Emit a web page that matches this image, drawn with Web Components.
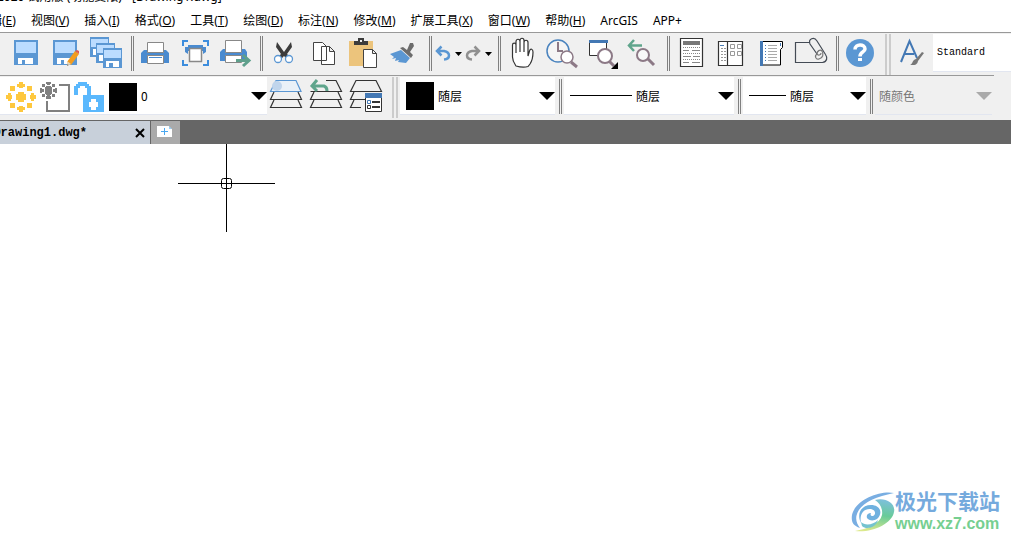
<!DOCTYPE html>
<html lang="zh-CN">
<head>
<meta charset="utf-8">
<title>[Drawing1.dwg]</title>
<style>
  html, body { margin: 0; height: 100%; background: #fff; }
  body { font-family: "Noto Sans", "Noto Sans CJK SC", sans-serif; font-size: 12px; color: #000; }
</style>
</head>
<body>
<cad-app></cad-app>

<script>
const ICONS = {
  save: `<path fill="#5b97d3" d="M8 7h24v25H8z"/><path fill="#bbdcff" d="M10 9h20v11H10z"/><path fill="#fff" d="M12 25h15v6H12z"/><path fill="#5b97d3" d="M16 27h3v5h-3z"/>`,
  saveas: `<path fill="#5b97d3" d="M7 7h24v25H7z"/><path fill="#bbdcff" d="M9 9h20v11H9z"/><path fill="#fff" d="M11 25h14v6H11z"/><path fill="#5b97d3" d="M15 27h3v5h-3z"/><path fill="#f39c1f" d="M29 18l4 3-8 11-4-3z"/><path fill="#e05a50" d="M29 18l2-1 2 1v3z"/><path fill="#e8d5b5" d="M21 28l4 3-4 2z"/><path fill="#888" d="M21 31l2 1-2 1z"/>`,
  saveall: `<path fill="#5b97d3" d="M4 4h19v20H4z"/><path fill="#bbdcff" d="M5 6h17v8H5z"/><path fill="#fff" d="M7 16h12v6H7z"/><path fill="#5b97d3" d="M10 10h19v20H10z"/><path fill="#bbdcff" d="M11 12h17v8H11z"/><path fill="#fff" d="M13 22h12v6H13z"/><path fill="#5b97d3" d="M17 15h19v20H17z"/><path fill="#bbdcff" d="M18 17h17v8H18z"/><path fill="#fff" d="M20 28h13v6H20z"/><path fill="#5b97d3" d="M23 30h4v4h-4z"/>`,
  print: `<path fill="#4a8bd0" d="M9 17h22l3 3v10H6V20z"/><path fill="#fff" stroke="#888" d="M12.500 9.500h16v10h-16zM12.500 22.500h16v8h-16z"/><path stroke="#4a8bd0" d="M14 24.500h13"/>`,
  extents: `<path fill="none" stroke="#3d8ddd" stroke-width="2" d="M8 13V8h5M28 8h5v5M8 27v5h5M28 32h5v-5"/><path fill="#4a8bd0" d="M13 12h15v2h3v5l-3 2v-3H13v3l-3-2v-5h3z"/><path fill="#fff" stroke="#888" stroke-width="1.500" d="M14.500 15.500h12v13h-12z"/>`,
  export: `<path fill="#4a8bd0" d="M8 16h22l2 3v9H5V19z"/><path fill="#fff" stroke="#888" d="M10.500 7.500h16v12h-16zM10.500 22.500h16v7h-16z"/><path fill="none" stroke="#5fa08c" stroke-width="3" d="M21 27.500h12M28 22l6 5.500-6 5.500"/>`,
  cut: `<path fill="#3c3c3c" d="M13 9l7 10 7-10 1 5-5 7 3 3-3 2-3-3-3 3-3-2 3-3-5-7z"/><circle cx="14" cy="26" r="3.500" fill="#fff" stroke="#5b97d3" stroke-width="1.300"/><circle cx="25" cy="26" r="3.500" fill="#fff" stroke="#5b97d3" stroke-width="1.300"/>`,
  copy: `<path fill="#fff" stroke="#444" d="M9.500 9.500h9l4 4v14h-13zM17.500 13.500h8l5 5v13h-13zM25.500 13.500v5h5"/>`,
  paste: `<path fill="#ecc47c" d="M5 8h24v25H5z"/><path fill="#3c3c3c" d="M10 8h4V5h6v3h4v4H10z"/><path fill="#eee" d="M16 7h2v2h-2z"/><path fill="#fff" stroke="#444" d="M19.500 16.500h9l4 4v14h-13zM28.500 16.500v4h4"/>`,
  brush: `<path fill="#5b97d3" d="M6 21l11-4 9 8-4 5-8-1 1-2-4 1 1-3-4 1 2-2z"/><path fill="#6c6c6c" d="M16 15l3-1 4 3 3-7 3 0 1 3-4 6 3 3-2 3z"/>`,
  undo: `<path fill="none" stroke="#5b97d3" stroke-width="2.500" d="M4 18h7q5 1 5 4.500T11 26.500M8.500 13.500l-4.500 4.500 4.500 4.500"/>`,
  redo: `<path fill="none" stroke="#909090" stroke-width="2.500" d="M16 18H9q-5 1-5 4.500T9 26.500M11.500 13.500l4.500 4.500-4.500 4.500"/>`,
  caret: `<path d="M2 19h7l-3.500 4z"/>`,
  hand: `<path fill="#fff" stroke="#333" stroke-width="1.200" d="M14 33C12 30 10.500 28 10.500 24V12c0-2.500 3.500-2.500 3.500 0v8V8.500c0-3 4-3 4 0V19V7.500c0-3 4-3 4 0V19V9.500c0-3 4-3 4 0V23l1.500-5c1-3 3.500-2 3.500 1 0 5-1 9-3 12l-2 2.500q-5 1.500-12-.500z"/>`,
  zoomtime: `<circle cx="16" cy="18" r="11" fill="#f5f5f5" stroke="#4a83be" stroke-width="1.500"/><path fill="none" stroke="#8c7986" stroke-width="2" d="M16 9v9h5"/><path stroke="#8c7986" stroke-width="3" d="M29 29l6 5"/><circle cx="25" cy="24" r="6" fill="#fff" stroke="#8c7986" stroke-width="1.500"/>`,
  zoomwin: `<path fill="#fff" stroke="#333" d="M7.500 7.500h17v15h-17z"/><path fill="#4378b4" d="M7 7h19v3H7z"/><path stroke="#8c7986" stroke-width="3" d="M27 28l5 5"/><circle cx="23" cy="23" r="7" fill="#fff" stroke="#8c7986" stroke-width="2"/><path d="M36 29v7h-7z"/>`,
  zoomprev: `<path fill="none" stroke="#5fa58c" stroke-width="2.500" d="M7 12.500h13M12 7l-5 5.500 5 5.500"/><path stroke="#8c7986" stroke-width="3" d="M26 26l6 6"/><circle cx="21" cy="22" r="6" fill="#f8f8f8" stroke="#8c7986" stroke-width="2"/>`,
  props: `<path fill="#fff" stroke="#333" stroke-width="1.200" d="M9.500 5.500h22v28h-22z"/><path fill="#777" d="M12 8h17v4H12z"/><path fill="none" stroke="#888" stroke-dasharray="1 1" d="M12 14.500h17M12 20.500h17M12 26.500h17"/><path fill="none" stroke="#888" d="M12 17.500h6M21 17.500h8M12 23.500h8M22 23.500h7M12 29.500h6M21 29.500h8"/>`,
  design: `<path fill="#fff" stroke="#333" stroke-width="1.200" d="M7.500 8.500h24v24h-24zM16.500 8.500v24"/><path fill="none" stroke="#999" d="M19.500 11.500h4v4h-4zM26.500 11.500h4v4h-4zM19.500 18.500h4v4h-4zM26.500 18.500h4v4h-4z"/><path fill="none" stroke="#4a7db5" d="M9 12.500h4"/><path fill="none" stroke="#999" stroke-dasharray="2 1" d="M10 15.500h5M10 18.500h5M10 21.500h5M10 24.500h5M10 27.500h5"/>`,
  sheets: `<path fill="#fff" stroke="#000" d="M10.500 8.500h21v6l-2 2v15.500h-19z"/><path fill="#4378b4" d="M9 8h3v25H9zM29 10h1v3h-1z"/><path stroke="#4378b4" d="M14 12.500h1M14 15.500h1M14 18.500h1M14 21.500h1M14 24.500h1M14 27.500h1"/><path stroke="#aaa" d="M17 12.500h9M17 15.500h9M17 18.500h9M17 21.500h9M17 24.500h9M17 27.500h9"/>`,
  markup: `<path fill="#f0f0f0" stroke="#444b55" stroke-width="1.200" d="M18.500 9.500h-14v20h27c5-1 5-5 3-8L26 8c-3-5-9-2-7 3l7 10"/><path fill="none" stroke="#777" stroke-width="1.200" d="M26 21c-3 2-1 6 2 5 4-1 5-5 3-8-2-2-5 0-5 3 1 2 4 1 4-1"/>`,
  help: `<circle cx="20" cy="20" r="14" fill="#5b97d3"/><path fill="none" stroke="#fff" stroke-width="3.500" d="M15 16.500c0-6 10-6 10-.500 0 3-5 3-5 7.500"/><path fill="#fff" d="M18 25h4v3h-4z"/>`,
  style: `<path fill="none" stroke="#4378b4" stroke-width="2" d="M8 29L16.500 8 24 25M11 21h10"/><path fill="#777" d="M29 19l2 1-6 8c-1 5-5 4-8 4 3-1 2-5 6-6z"/>`,
  layers: `<path fill="#eaf1f8" stroke="#5b97d3" stroke-width="1.200" d="M9 4.500h20l5 11H3.500z"/><circle cx="10" cy="10" r="5" fill="#c0d5ec"/><path class="l" d="M7 16l-3.500 7.500h31L31 16M7 24l-3.500 7.500h31L31 24"/>`,
  layerprev: `<path class="l" d="M19 4.500h10l5.500 11h-31M7 16l-3.500 7.500h31L31 16M7 24l-3.500 7.500h31L31 24"/><path fill="none" stroke="#5fa58c" stroke-width="3" d="M5 10h12q3 1 3 5M10 4l-5 6 5 5"/>`,
  layerman: `<path class="l" d="M9 4.500h20l5.500 11h-31zM7 16l-3.500 7.500H19M7 24l-3.500 7.500H14"/><path fill="#fff" stroke="#333" d="M18.500 17.500h16v18h-16z"/><path fill="#4378b4" d="M18 17h17v5H18z"/><path fill="none" stroke="#4378b4" d="M20.500 24.500h3v3h-3z"/><path fill="none" stroke="#333" d="M20.500 29.500h3v3h-3z"/><path fill="#333" d="M25 25h8v2h-8zM25 30h8v2h-8z"/>`,
  sun: `<path fill="#fec83e" d="M14 15h6v2h2v6h-2v2h-6v-2h-2v-6h2zM15 5h4v2h2v3h-2v1h-4v-1h-2V7h2zM15 29h4v1h2v3h-2v2h-4v-2h-2v-3h2zM2 18h2v-2h3v2h1v4H7v2H4v-2H2zM32 18h-2v-2h-3v2h-1v4h1v2h3v-2h2zM6 9h5v5H6zM23 9h5v5h-5zM6 26h5v5H6zM23 26h5v5h-5z"/>`,
  freeze: `<path fill="none" stroke="#808080" stroke-width="2" d="M21 8h10v26H9V24"/><path fill="#808080" d="M8 9h5v1h1v7h-1v1H8v-1H7v-7h1zM8 5h5v2h-1v1H9V7H8zM9 18h3v1h1v3H8v-3h1zM2 11h2v1h2v3H4v1H2zM19 11h-2v1h-2v3h2v1h2zM4 7h3v3H4zM14 7h3v3h-3zM4 17h3v3H4zM14 17h3v3h-3z"/>`,
  lock: `<path fill="#5ab8fd" fill-rule="evenodd" d="M2 18V9h2V7h2V5h9v2h2v2h2v9h13v17H11V18h4v-7h-2V9H8v2H6v7zM19 22v3h-2v5h2v3h5v-3h2v-5h-2v-3z"/>`
};

function define(name, html, setup) {
  const tpl = document.createElement('template');
  tpl.innerHTML = html;
  customElements.define(name, class extends HTMLElement {
    constructor() {
      super();
      this.attachShadow({ mode: 'open' }).append(tpl.content.cloneNode(true));
    }
    connectedCallback() { if (setup) setup(this, this.shadowRoot); }
  });
}

/* Square toolbar button showing one entry of ICONS */
define('tool-button', `
<style>
  :host { display: block; flex: none; width: 40px; --h: 42px; }
  :host([size="small"]) { width: 20px; }
  :host([size="caret"]) { width: 10px; }
  :host([size="layer"]) { width: 34px; --h: 37px; }
  button { display: block; width: 100%; height: var(--h); margin: 0; padding: 0; border: 0; background: none; }
  svg { display: block; width: 100%; height: 100%; }
  .l { fill: none; stroke: #333; stroke-width: 1.200; }
</style>
<button type="button"></button>`, (el, root) => {
  const size = el.getAttribute('size');
  const w = { small: 20, caret: 10, layer: 34 }[size] || 40;
  const h = size === 'layer' ? 37 : 42;
  const b = root.querySelector('button');
  b.setAttribute('aria-label', el.getAttribute('label'));
  b.innerHTML = `<svg viewBox="0 0 ${w} ${h}" aria-hidden="true">${ICONS[el.getAttribute('icon')]}</svg>`;
});

/* Double rule between groups; "thick" marks the start of another toolbar */
define('tool-rule', `
<style>
  :host { display: flex; flex: none; box-sizing: border-box; width: 9px; height: 35px; padding-left: 5px; gap: 1px; margin-top: 3px; }
  i { width: 1px; background: #808080; }
  :host([thick]) { width: 13px; height: 41px; margin-top: 1px; gap: 2px; }
  :host([thick]) i { width: 2px; background: #ccc; }
</style><i></i><i></i>`);

/* Drop-down with optional leading content in the slot */
define('combo-box', `
<style>
  :host { display: flex; flex: none; box-sizing: border-box; height: 38px; margin-top: 1px; background: #fff; border-bottom: 1px solid #e2e6f0; align-items: center; overflow: hidden; }
  :host([disabled]) { background: none; }
  select { appearance: none; flex: 1; min-width: 0; height: 37px; margin: 0; padding: 0 0 0 4px; border: 0; border-radius: 0;
    background: url("data:image/svg+xml,%3Csvg xmlns='http://www.w3.org/2000/svg' width='16' height='8'%3E%3Cpath d='M0 0h16L8 8z'/%3E%3C/svg%3E") no-repeat right center;
    font: 12px "Noto Sans CJK SC", sans-serif; color: #000; }
  select:disabled { opacity: 1; color: #777;
    background-image: url("data:image/svg+xml,%3Csvg xmlns='http://www.w3.org/2000/svg' width='16' height='8'%3E%3Cpath fill='%23aaa' d='M0 0h16L8 8z'/%3E%3C/svg%3E"); }
  :host([plain]) select { background-image: none; font: 10px "Liberation Mono", monospace; }
</style>
<slot></slot><select><option></option></select>`, (el, root) => {
  const s = root.querySelector('select');
  s.setAttribute('aria-label', el.getAttribute('label'));
  s.disabled = el.hasAttribute('disabled');
  s.options[0].textContent = el.getAttribute('value');
});

define('title-line', `
<style>
  :host { display: flex; align-items: flex-end; height: 5px; overflow: hidden; white-space: pre; line-height: 16px; }
  span { margin-left: -3px; }
</style><span><slot></slot></span>`);

define('menu-bar', `
<style>
  :host { display: flex; gap: 15px; height: 27px; padding-top: 5px; box-sizing: border-box; align-items: center; margin-left: -22px; white-space: nowrap; }
  ::slotted(a) { color: #000; text-decoration: none; line-height: 18px; }
</style><slot></slot>`);

define('tool-bar', `
<style>
  :host { display: flex; height: 43px; border-top: 1px solid #999; box-sizing: border-box; align-items: flex-start; }
</style><slot></slot>`);

define('file-tabs', `
<style>
  :host { display: flex; height: 24px; background: #666; box-sizing: border-box; padding-top: 1px; }
  .tab { display: flex; align-items: center; justify-content: flex-end; box-sizing: border-box; width: 151px; padding-right: 5px; gap: 48px; background: #c8d0da; border-right: 1px solid #666; overflow: hidden; }
  .tab a { font: bold 12px "Liberation Mono", monospace; color: #000; text-decoration: none; }
  button { display: block; border: 0; padding: 0; margin: 0; background: none; }
  .new { width: 29px; background: #aaa; }
  svg { display: block; }
</style>
<div class="tab"><a href="#drawing">Drawing1.dwg*</a>
<button type="button" aria-label="关闭"><svg width="10" height="10"><path stroke="#000" stroke-width="2" d="M1 1l8 8M9 1l-8 8"/></svg></button></div>
<button class="new" type="button" aria-label="新建"><svg width="29" height="23"><path fill="#fff" d="M6 5h12v3h3v8H6z"/><path fill="#9bd0f5" d="M18 5l3 3h-3z"/><path stroke="#4aa8f0" d="M10 10.500h7M13.500 7v7"/></svg></button>`);

define('site-mark', `
<style>
  :host { display: flex; align-items: center; }
  svg { display: block; flex: none; overflow: visible; }
  b, span { display: block; white-space: nowrap; }
  b { font: 700 21px/24px "Liberation Sans", "Noto Sans CJK SC", sans-serif; color: #75aadd; }
  span { font: 700 16px/20px "Liberation Sans", sans-serif; color: #76cf91; }
</style>
<svg width="43" height="40" viewBox="0 0 43 40" aria-hidden="true">
  <defs><linearGradient id="g" x1=".500" y1="0" x2=".300" y2="1"><stop offset="0" stop-color="#7cc0d8"/><stop offset=".450" stop-color="#68cb98"/><stop offset="1" stop-color="#dde98c"/></linearGradient></defs>
  <path fill="#79aee2" d="M42 1C28-2 3 8 0 23c-1 7 1 11 8 13-3-4-5-9-3-14C8 12 22 5 42 1z"/>
  <path fill="url(#g)" d="M23 8c10-3 21 3 19 12C40 32 20 41 3 39c12-2 25-7 27-16 1-6-2-12-7-15z"/>
  <path fill="#6fb1df" d="M9 31c-5-10 1-18 10-18 10 0 12 9 6 14-3 2-8 2-10-1-1-3 1-5 4-5-1 2 0 3 2 3 3-1 3-6-2-7-7-1-12 5-10 14z"/>
  <path fill="#74c3cf" d="M9 30c4 4 12 3 17-2-1 6-11 11-16 6z"/>
</svg>
<div><b>极光下载站</b><span>www.xz7.com</span></div>`);

define('drawing-area', `
<style>
  :host { display: block; position: relative; flex: 1; background: #fff; overflow: hidden; }
  .cross { position: absolute; left: 178px; top: 0; }
  site-mark { position: absolute; right: 11px; bottom: 8px; }
</style>
<svg class="cross" width="97" height="88" aria-label="十字光标"><path fill="none" stroke="#000" d="M0 39.500h97M48.500 0v88"/><rect x="43.500" y="34.500" width="10" height="10" rx="2" fill="none" stroke="#000"/></svg>
<site-mark></site-mark>`);

define('cad-app', `
<style>
  :host { display: flex; flex-direction: column; min-height: 100vh; overflow: hidden; }
  .bars { background: #f0f0f0; }
  .first { padding-left: 6px; }
  .second { height: 45px; margin-right: 17px; }
  .text-style { flex: 1; min-width: 60px; }
  .layer { width: 267px; }
  .color { width: 155px; }
  .linetype { width: 170px; }
  .weight { width: 123px; }
  .plot { width: 117px; }
  .layer tool-button:first-child { margin-left: 4px; }
  .second tool-rule:not([thick]) { padding-left: 4px; }
  .swatch { flex: none; width: 28px; height: 28px; background: #000; }
  .layer .swatch { margin: 3px 0 0 3px; }
  .color .swatch { margin-left: 6px; }
  .line { flex: none; height: 1px; margin-left: 6px; background: #000; width: 62px; }
  .weight .line { width: 37px; }
</style>
<title-line>2020 试用版 (功能受限) - [Drawing1.dwg]</title-line>
<menu-bar>
  <a href="#edit">编辑(<u>E</u>)</a><a href="#view">视图(<u>V</u>)</a><a href="#insert">插入(<u>I</u>)</a><a href="#format">格式(<u>O</u>)</a><a href="#tools">工具(<u>T</u>)</a><a href="#draw">绘图(<u>D</u>)</a><a href="#dim">标注(<u>N</u>)</a><a href="#modify">修改(<u>M</u>)</a><a href="#ext">扩展工具(<u>X</u>)</a><a href="#window">窗口(<u>W</u>)</a><a href="#help">帮助(<u>H</u>)</a><a href="#arcgis">ArcGIS</a><a href="#app">APP+</a>
</menu-bar>
<div class="bars">
  <tool-bar class="first">
    <tool-button icon="save" label="保存"></tool-button><tool-button icon="saveas" label="另存为"></tool-button><tool-button icon="saveall" label="全部保存"></tool-button>
    <tool-rule></tool-rule>
    <tool-button icon="print" label="打印"></tool-button><tool-button icon="extents" label="打印预览"></tool-button><tool-button icon="export" label="发布"></tool-button>
    <tool-rule></tool-rule>
    <tool-button icon="cut" label="剪切"></tool-button><tool-button icon="copy" label="复制"></tool-button><tool-button icon="paste" label="粘贴"></tool-button><tool-button icon="brush" label="特性匹配"></tool-button>
    <tool-rule></tool-rule>
    <tool-button icon="undo" size="small" label="撤销"></tool-button><tool-button icon="caret" size="caret" label="撤销列表"></tool-button><tool-button icon="redo" size="small" label="重做"></tool-button><tool-button icon="caret" size="caret" label="重做列表"></tool-button>
    <tool-rule></tool-rule>
    <tool-button icon="hand" label="平移"></tool-button><tool-button icon="zoomtime" label="实时缩放"></tool-button><tool-button icon="zoomwin" label="窗口缩放"></tool-button><tool-button icon="zoomprev" label="上一个缩放"></tool-button>
    <tool-rule></tool-rule>
    <tool-button icon="props" label="特性"></tool-button><tool-button icon="design" label="设计中心"></tool-button><tool-button icon="sheets" label="工具选项板"></tool-button><tool-button icon="markup" label="清理"></tool-button>
    <tool-rule></tool-rule>
    <tool-button icon="help" label="帮助"></tool-button>
    <tool-rule thick></tool-rule>
    <tool-button icon="style" label="文字样式"></tool-button>
    <combo-box plain class="text-style" label="文字样式" value="Standard"></combo-box>
  </tool-bar>
  <tool-bar class="second">
    <combo-box class="layer" label="图层" value="0"><tool-button icon="sun" size="layer" label="开/关"></tool-button><tool-button icon="freeze" size="layer" label="冻结"></tool-button><tool-button icon="lock" size="layer" label="锁定"></tool-button><span class="swatch"></span></combo-box>
    <tool-button icon="layers" label="图层置为当前"></tool-button><tool-button icon="layerprev" label="上一个图层"></tool-button><tool-button icon="layerman" label="图层特性"></tool-button>
    <tool-rule thick></tool-rule>
    <combo-box class="color" label="颜色" value="随层"><span class="swatch"></span></combo-box>
    <tool-rule></tool-rule>
    <combo-box class="linetype" label="线型" value="随层"><span class="line"></span></combo-box>
    <tool-rule></tool-rule>
    <combo-box class="weight" label="线宽" value="随层"><span class="line"></span></combo-box>
    <tool-rule></tool-rule>
    <combo-box class="plot" disabled label="打印样式" value="随颜色"></combo-box>
  </tool-bar>
</div>
<file-tabs></file-tabs>
<drawing-area></drawing-area>`);
</script>
</body>
</html>
